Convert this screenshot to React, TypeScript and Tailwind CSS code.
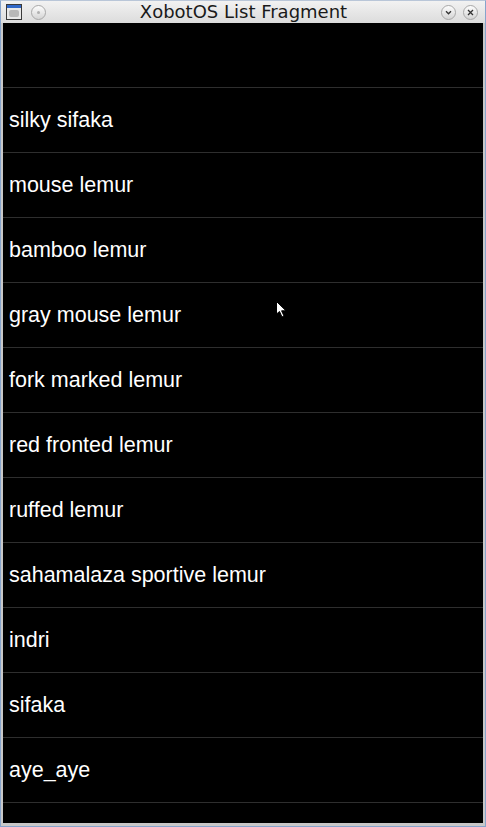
import React from "react";

const lemurs = [
  "silky sifaka",
  "mouse lemur",
  "bamboo lemur",
  "gray mouse lemur",
  "fork marked lemur",
  "red fronted lemur",
  "ruffed lemur",
  "sahamalaza sportive lemur",
  "indri",
  "sifaka",
  "aye_aye",
];

const RoundButton = ({ children }: { children?: React.ReactNode }) => (
  <div className="flex items-center justify-center w-[15px] h-[15px] rounded-full border border-[#a8a8a8] bg-gradient-to-b from-[#fdfdfd] to-[#d4d4d4]">
    {children}
  </div>
);

const App = () => {
  return (
    <div className="w-[486px] h-[827px] flex flex-col bg-[#c8c8c8] border border-[#86a4cc] border-t-[#b9c6d8] overflow-hidden font-['Liberation_Sans',Arial,sans-serif]">
      {/* title bar */}
      <div className="relative flex items-center h-[22px] shrink-0 px-[4px] bg-gradient-to-b from-[#f2f2f2] to-[#dcdcdc]">
        <div className="w-[16px] h-[16px] ml-[1px] border border-[#3a3a3a] bg-[#e8e8e8] flex flex-col">
          <div className="h-[3px] bg-[#3068c8]" />
          <div className="flex-1 m-[2px] rounded-[2px] bg-[#b8b8b8]" />
        </div>
        <div className="ml-[9px]">
          <RoundButton>
            <div className="w-[3px] h-[3px] rounded-full bg-[#b0b0b0]" />
          </RoundButton>
        </div>
        <div className="flex-1 text-center text-[18px] leading-none text-[#1a1a1a] font-['DejaVu_Sans',sans-serif] -mt-[1px]">
          XobotOS List Fragment
        </div>
        <div className="flex gap-[7px] mr-[3px]">
          <RoundButton>
            <svg width="9" height="9" viewBox="0 0 9 9">
              <path d="M2 3.2 L4.5 5.8 L7 3.2" fill="none" stroke="#333" strokeWidth="1.3" />
            </svg>
          </RoundButton>
          <RoundButton>
            <svg width="9" height="9" viewBox="0 0 9 9">
              <path d="M2 2 L7 7 M7 2 L2 7" fill="none" stroke="#333" strokeWidth="1.3" />
            </svg>
          </RoundButton>
        </div>
      </div>

      {/* content */}
      <div className="relative flex-1 mx-[2px] mb-[3px] bg-black overflow-hidden">
        <div className="h-[65px] border-b border-[#2e2e2e]" />
        {lemurs.map((name) => (
          <div
            key={name}
            className="h-[65px] flex items-center pl-[6px] border-b border-[#2e2e2e] text-white text-[21.5px]"
          >
            {name}
          </div>
        ))}

        {/* mouse pointer */}
        <svg
          className="absolute left-[273px] top-[278px]"
          width="12"
          height="18"
          viewBox="0 0 12 18"
        >
          <path d="M0.5 0.5 L0.5 13 L3.5 10.5 L6 16 L8 15 L5.6 9.8 L10 9.8 Z" fill="#fff" stroke="#000" strokeWidth="1" />
        </svg>
      </div>
    </div>
  );
};

export default App;
